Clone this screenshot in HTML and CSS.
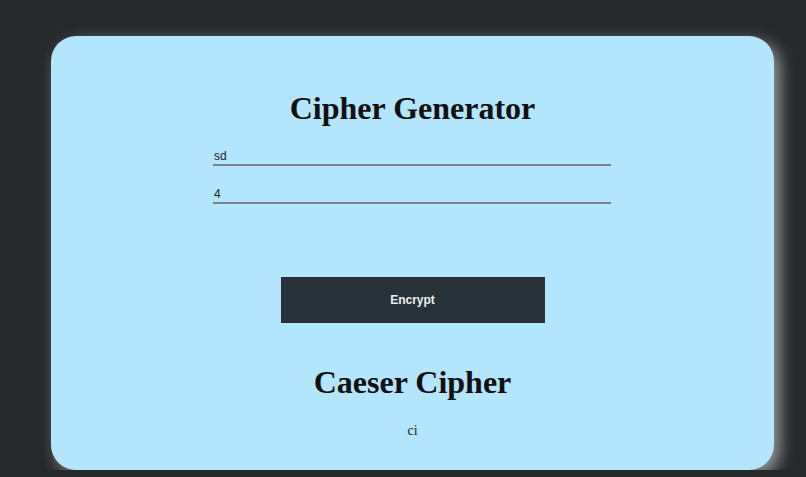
FILE: index.html
```html
<!DOCTYPE html>
<html lang="en">
<head>
    <meta charset="UTF-8">
    <meta name="viewport" content="width=device-width, initial-scale=1.0">
    <title>Cipher Generator</title>
    <link rel="stylesheet" href="styles.css">
</head>
<body>
    <div class="card">
        <h1>Cipher Generator</h1>

        <div class="fields">
            <input type="text" id="message" value="sd">
            <input type="number" id="shift" value="4">
        </div>

        <button class="btn">Encrypt</button>

        <h2>Caeser Cipher</h2>
        <p class="output" id="output">ci</p>
    </div>
</body>
</html>
```

FILE: styles.css
```css
body {
    margin: 0;
    padding: 36px 0 0 51px;
    background-color: #25292c;
    font-family: "Liberation Serif", "Times New Roman", serif;
    overflow: hidden;
}
.card {
    width: 723px;
    height: 434px;
    box-sizing: border-box;
    background: #b3e5fc;
    border-radius: 25px;
    box-shadow: 6px 6px 16px rgba(200, 200, 200, 0.7);
    display: flex;
    flex-direction: column;
    align-items: center;
    padding-top: 56px;
}
h1 {
    font-size: 32px;
    margin: 0;
    line-height: 32px;
    color: #111;
}
.fields {
    width: 398px;
    display: flex;
    flex-direction: column;
    gap: 20px;
    margin: 24px 1px 0 0;
}
.fields input {
    background: transparent;
    border: none;
    border-bottom: 2px solid #78848a;
    padding: 0 1px 1px;
    height: 15px;
    font-family: "Liberation Sans", Arial, sans-serif;
    font-size: 12px;
    color: #222;
    outline: none;
}
.fields input::-webkit-inner-spin-button {
    display: none;
}
.btn {
    width: 264px;
    height: 46px;
    margin-top: 73px;
    background: #263238;
    color: #eceff1;
    border: none;
    font-family: "Liberation Sans", Arial, sans-serif;
    font-size: 12px;
    font-weight: bold;
    cursor: pointer;
}
h2 {
    font-size: 32px;
    line-height: 32px;
    margin: 43px 0 0;
    color: #111;
}
.output {
    margin: 25px 0 0;
    font-size: 14px;
    color: #222;
}
```
